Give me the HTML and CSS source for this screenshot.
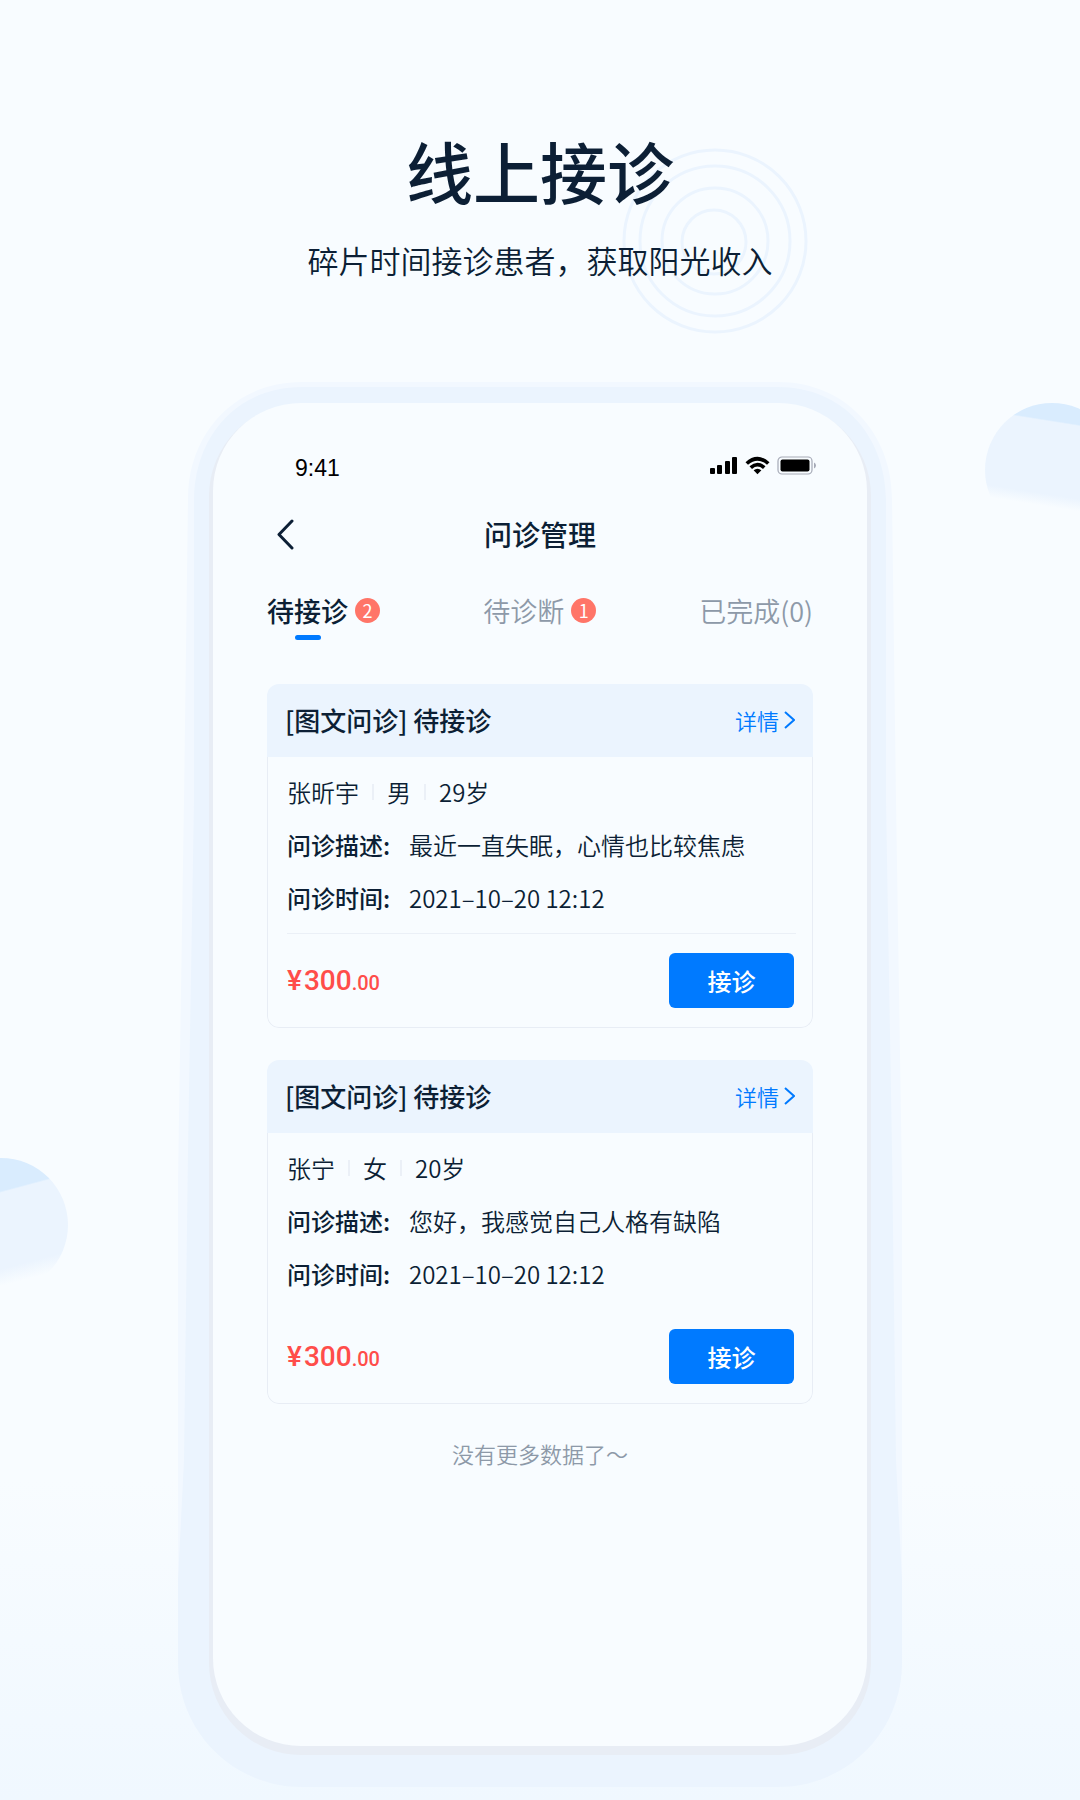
FILE: index.html
```html
<!DOCTYPE html>
<html lang="zh-CN">
  <head>
    <meta charset="utf-8">
    <meta name="viewport" content="width=device-width, initial-scale=1">
    <title>线上接诊</title>
    <link rel="stylesheet" href="styles.css">
  </head>
  <body>
    <div class="page">
      <div class="ball ball-right"></div>
      <div class="ball ball-left"></div>

      <header class="intro">
        <svg class="rings" viewBox="0 0 190 190" aria-hidden="true">
          <g fill="none" stroke="#ebf4fe" stroke-width="3">
            <circle cx="95" cy="95" r="91"/>
            <circle cx="95" cy="95" r="75"/>
            <circle cx="95" cy="95" r="53"/>
            <circle cx="94" cy="96" r="32"/>
          </g>
        </svg>
        <h1>线上接诊</h1>
        <p>碎片时间接诊患者，获取阳光收入</p>
      </header>

      <div class="device">
        <svg class="frame" viewBox="0 0 726 1408" preserveAspectRatio="none" aria-hidden="true">
          <path fill="#f2f8ff" d="M125 1H601C668 1 715 52 715 118L719 420L725 800V1283C725 1352 670 1407 601 1407H125C56 1407 1 1352 1 1283V800L7 420L11 118C11 52 58 1 125 1Z"/>
          <path fill="#ebf4fe" d="M125 6H601C665 6 708 54 709 118V420L715 770L719 1080L725 1200V1283C725 1352 670 1407 601 1407H125C56 1407 1 1352 1 1283V1200L7 1080L11 770L17 420V118C18 54 61 6 125 6Z"/>
        </svg>

        <main class="screen">
          <div class="status">
            <span>9:41</span>
            <svg width="108" height="20" viewBox="0 0 108 20" aria-hidden="true">
              <rect x="1" y="13" width="5" height="6" rx="1"/>
              <rect x="8" y="10" width="5" height="9" rx="1"/>
              <rect x="16" y="6" width="5" height="13" rx="1"/>
              <rect x="23" y="2" width="5" height="17" rx="1"/>
              <path d="M36.500 7.200Q48.500 -3.500 60.500 7.200L58 9.800Q48.500 1.600 39 9.800Z"/>
              <path d="M40.500 11.300Q48.500 4.300 56.500 11.300L54 13.900Q48.500 9.300 43 13.900Z"/>
              <path d="M44.600 15.300Q48.500 12.300 52.400 15.300L48.500 19.200Z"/>
              <rect x="69" y="2" width="34" height="17" rx="4" fill="none" stroke="#a5a9b6" stroke-width="1.200"/>
              <rect x="71.500" y="4.500" width="29" height="12" rx="2"/>
              <path fill="#a5a9b6" d="M105 7.500Q107 8.500 107 10.500T105 13.500Z"/>
            </svg>
          </div>

          <div class="navbar">
            <button type="button" class="back" aria-label="返回">
              <svg width="20" height="32" viewBox="0 0 20 32" aria-hidden="true"><path d="M17 3L4 16.500L17 30"/></svg>
            </button>
            <h2>问诊管理</h2>
          </div>

          <nav class="tabs">
            <a href="#" class="tab active"><span class="name">待接诊</span><span class="badge">2</span></a>
            <a href="#" class="tab"><span class="name">待诊断</span><span class="badge">1</span></a>
            <a href="#" class="tab"><span class="name">已完成(0)</span></a>
          </nav>

          <article class="card">
            <div class="card-head">
              <h3>[图文问诊] 待接诊</h3>
              <a href="#" class="more">详情<svg width="11" height="18" viewBox="0 0 11 18" aria-hidden="true"><path d="M1 1L10 9L1 17"/></svg></a>
            </div>
            <div class="card-body">
              <div class="patient"><span>张昕宇</span><span>男</span><span>29岁</span></div>
              <dl>
                <dt>问诊描述:</dt><dd>最近一直失眠，心情也比较焦虑</dd>
                <dt>问诊时间:</dt><dd>2021–10–20 12:12</dd>
              </dl>
              <div class="card-foot line">
                <span class="price"><span class="yen">¥</span>300<small>.00</small></span>
                <button type="button" class="accept">接诊</button>
              </div>
            </div>
          </article>

          <article class="card">
            <div class="card-head">
              <h3>[图文问诊] 待接诊</h3>
              <a href="#" class="more">详情<svg width="11" height="18" viewBox="0 0 11 18" aria-hidden="true"><path d="M1 1L10 9L1 17"/></svg></a>
            </div>
            <div class="card-body">
              <div class="patient"><span>张宁</span><span>女</span><span>20岁</span></div>
              <dl>
                <dt>问诊描述:</dt><dd>您好，我感觉自己人格有缺陷</dd>
                <dt>问诊时间:</dt><dd>2021–10–20 12:12</dd>
              </dl>
              <div class="card-foot">
                <span class="price"><span class="yen">¥</span>300<small>.00</small></span>
                <button type="button" class="accept">接诊</button>
              </div>
            </div>
          </article>

          <p class="end">没有更多数据了～</p>
        </main>
      </div>
    </div>
  </body>
</html>
```

FILE: styles.css
```css
* { box-sizing: border-box; }
body {
  margin: 0;
  font-family: "Noto Sans CJK SC", sans-serif;
  font-size: 24px;
  font-weight: 350;
  color: #0c1f35;
  background: #f8fcff;
}
h1, h2, h3, p, dl, dd { margin: 0; }
a { color: inherit; text-decoration: none; }
button {
  border: 0;
  padding: 0;
  font-family: inherit;
  cursor: pointer;
}
.page {
  position: relative;
  min-height: 100vh;
  padding: 120px 24px 53px;
  overflow: hidden;
  background: linear-gradient(to top, #f0f8ff, #f8fcff 320px);
}

/* decoration */
.ball {
  position: absolute;
  width: 134px;
  height: 134px;
  border-radius: 50%;
}
.ball-right {
  top: 403px;
  right: -39px;
  background: linear-gradient(189deg, #d9ecfe 18%, #ebf4fe 19%, #ebf4fe 66%, #f8fcff 74%);
}
.ball-left {
  top: 1158px;
  left: -66px;
  background: linear-gradient(165deg, #d9ecfe 30%, #ebf4fe 31%, #ebf4fe 76%, #f8fcff 86%);
}

.intro {
  position: relative;
  text-align: center;
}
.rings {
  position: absolute;
  top: 26px;
  left: 50%;
  width: 190px;
  margin-left: 80px;
}
.intro h1 {
  position: relative;
  font-size: 67px;
  font-weight: 500;
  line-height: 100px;
}
.intro p {
  position: relative;
  margin-top: 18px;
  font-size: 31px;
  line-height: 44px;
}

.device {
  position: relative;
  max-width: 654px;
  margin: 121px auto 0;
}
.frame {
  position: absolute;
  top: -22px;
  left: -36px;
  width: calc(100% + 72px);
  height: calc(100% + 64px);
}
.screen {
  position: relative;
  padding: 45px 54px 276px;
  border-radius: 88px;
  background: #f8fcff;
  box-shadow: 0 5px 0 4px #e8edf5;
}

.status {
  display: flex;
  justify-content: space-between;
  align-items: center;
  padding-left: 28px;
  margin-right: -4px;
  height: 40px;
  font: 23px "Liberation Sans", sans-serif;
  color: #000;
}
.status svg { margin-bottom: 6px; }
.navbar {
  display: grid;
  grid-template-columns: 40px 1fr 40px;
  align-items: center;
  margin-top: 26px;
  height: 40px;
}
.back {
  display: flex;
  padding-left: 8px;
  background: none;
}
.back path {
  fill: none;
  stroke: #0c1f35;
  stroke-width: 3;
  stroke-linecap: round;
  stroke-linejoin: round;
}
.navbar h2 {
  font-size: 28px;
  font-weight: 500;
  line-height: 40px;
  text-align: center;
}

.tabs {
  display: flex;
  justify-content: space-between;
  margin-top: 36px;
}
.tab {
  display: flex;
  align-items: center;
  gap: 7px;
  height: 40px;
  font-size: 27px;
  color: #8d99a8;
}
.tab.active {
  position: relative;
  font-weight: 500;
  color: #0c1f35;
}
.tab.active::after {
  content: "";
  position: absolute;
  left: 28px;
  bottom: -10px;
  width: 26px;
  height: 5px;
  border-radius: 3px;
  background: #007aff;
}
.badge {
  width: 25px;
  height: 25px;
  border-radius: 50%;
  font-size: 18px;
  font-weight: 400;
  line-height: 25px;
  text-align: center;
  color: #fff;
  background: #ff7568;
}

.card {
  margin-top: 32px;
  border-radius: 12px;
  overflow: hidden;
}
.tabs + .card { margin-top: 54px; }
.card-head {
  display: flex;
  justify-content: space-between;
  align-items: center;
  height: 73px;
  padding: 0 18px 2px;
  background: #ebf4fe;
}
.card-head h3 {
  font-size: 26px;
  font-weight: 500;
}
.more {
  display: flex;
  align-items: center;
  gap: 5px;
  font-size: 22px;
  color: #007aff;
}
.more path {
  fill: none;
  stroke: #007aff;
  stroke-width: 2;
}
.card-body {
  padding: 9px 16px 0 19px;
  border: 1px solid #e8edf5;
  border-top: 0;
  border-radius: 0 0 12px 12px;
}
.patient {
  display: flex;
  height: 52px;
  line-height: 52px;
}
.patient span {
  display: flex;
  align-items: center;
}
.patient span + span::before {
  content: "";
  width: 2px;
  height: 16px;
  margin: 0 13px;
  background: #ebf0f7;
}
.card dl {
  display: grid;
  grid-template-columns: 122px 1fr;
  line-height: 53px;
}
.card dt { font-weight: 500; }
.card-foot {
  display: flex;
  justify-content: space-between;
  align-items: center;
  height: 94px;
  margin-top: 9px;
  padding-right: 2px;
  border-top: 1px solid transparent;
}
.card-foot.line { border-color: #ebf0f7; }
.price {
  font: 500 28px Roboto, sans-serif;
  color: #ff4d4a;
}
.price small {
  font-size: 20px;
}
.yen { margin-right: 2px; }
.accept {
  width: 125px;
  height: 55px;
  border-radius: 6px;
  font-size: 24px;
  font-weight: 500;
  color: #fff;
  background: #007aff;
}
.end {
  margin-top: 32px;
  font-size: 22px;
  line-height: 34px;
  text-align: center;
  color: #8d99a8;
}
```
